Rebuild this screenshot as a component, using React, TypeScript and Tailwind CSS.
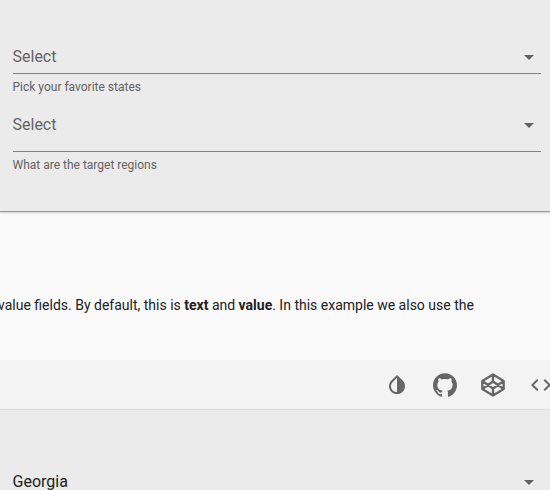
import type { ReactNode } from "react";
import { SiGithub } from "react-icons/si";
import { MdArrowDropDown, MdCode, MdInvertColors } from "react-icons/md";

function SelectRow({ children, className }: { children: ReactNode; className: string }) {
  return (
    <div className={`flex justify-between ${className}`}>
      <span className="text-[16px] leading-6">{children}</span>
      <MdArrowDropDown className="size-6 text-[#616161]" />
    </div>
  );
}

function CodepenIcon() {
  return (
    <svg viewBox="0 0 24 24" className="size-6 shrink-0" fill="none" stroke="currentColor" strokeWidth="2.3" strokeLinejoin="round">
      <path d="M12 1.5 22.7 8v8L12 22.5 1.3 16V8zM12 1.5v7M12 22.5v-7M1.3 8 12 15.5 22.7 8M1.3 16 12 8.5 22.7 16" />
    </svg>
  );
}

export default function App() {
  return (
    <div className="flex h-[490px] w-[550px] flex-col overflow-hidden bg-[#fafafa] font-[Roboto,sans-serif] text-[#212121]">
      <section className="h-[211px] shrink-0 bg-[#ebebeb] pt-[45px] pr-[9px] pl-[12.5px] text-[#636363] shadow-[0_1px_1px_#999,0_2px_3px_#ddd]">
        <SelectRow className="h-[29px] border-b border-[#838383]">Select</SelectRow>
        <p className="mt-[5px] text-xs leading-4">Pick your favorite states</p>
        <SelectRow className="mt-[18px] h-[39px] border-b border-[#838383]">Select</SelectRow>
        <p className="mt-[5px] text-xs leading-4">What are the target regions</p>
      </section>

      <p className="mt-[82px] -ml-0.5 h-6 text-[14px] leading-6 whitespace-nowrap">
        value fields. By default, this is <strong className="font-bold">text</strong> and{" "}
        <strong className="font-bold">value</strong>. In this example we also use the
      </p>

      <div className="mt-[43px] flex h-[50px] w-[553px] shrink-0 items-center justify-end gap-6 border-b border-[#dddddd] bg-[#f3f3f3] text-[#666666]">
        <MdInvertColors className="size-6 shrink-0" />
        <SiGithub className="size-6 shrink-0" />
        <CodepenIcon />
        <MdCode className="size-6 shrink-0" />
      </div>

      <section className="flex-1 bg-[#ebebeb] pt-[60px] pr-[9px] pl-[12.5px]">
        <SelectRow className="">Georgia</SelectRow>
      </section>
    </div>
  );
}
